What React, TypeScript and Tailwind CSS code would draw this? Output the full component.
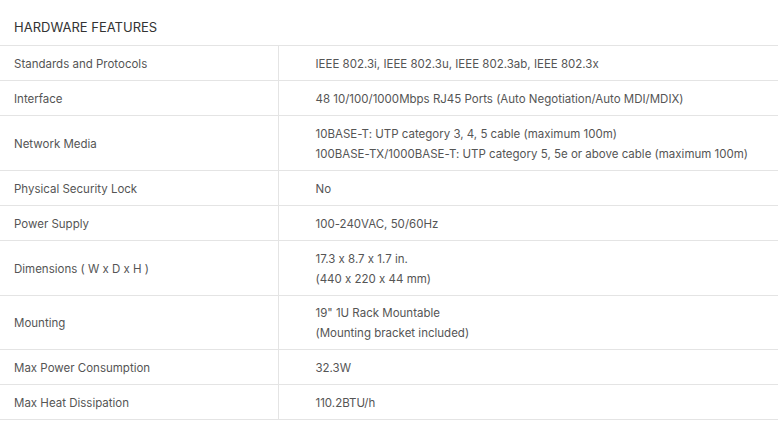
const rows: [string, string[]][] = [
  ["Standards and Protocols", ["IEEE 802.3i, IEEE 802.3u, IEEE 802.3ab, IEEE 802.3x"]],
  ["Interface", ["48 10/100/1000Mbps RJ45 Ports (Auto Negotiation/Auto MDI/MDIX)"]],
  [
    "Network Media",
    [
      "10BASE-T: UTP category 3, 4, 5 cable (maximum 100m)",
      "100BASE-TX/1000BASE-T: UTP category 5, 5e or above cable (maximum 100m)",
    ],
  ],
  ["Physical Security Lock", ["No"]],
  ["Power Supply", ["100-240VAC, 50/60Hz"]],
  ["Dimensions ( W x D x H )", ["17.3 x 8.7 x 1.7 in.", "(440 x 220 x 44 mm)"]],
  ["Mounting", ["19\" 1U Rack Mountable", "(Mounting bracket included)"]],
  ["Max Power Consumption", ["32.3W"]],
  ["Max Heat Dissipation", ["110.2BTU/h"]],
];

export default function App() {
  return (
    <div className="w-[778px] h-[424px] bg-white font-['Inter',sans-serif] [font-feature-settings:'calt'_0,'pnum'_1] overflow-hidden">
      <h3 className="h-[45px] flex items-center px-[14px] pt-[10px] text-[13px] text-[#333] uppercase">
        Hardware Features
      </h3>
      <table className="w-full border-collapse">
        <tbody>
          {rows.map(([label, values]) => {
            // the mounting row sits one pixel shorter in the source page
            const pad = label === "Mounting" ? "pt-[7px] pb-[6px]" : "pt-[7.5px] pb-[6.5px]";
            return (
              <tr key={label} className="border-y border-[#e4e4e4]">
                <td
                  className={`w-[278px] border-r border-[#e4e4e4] px-[14px] ${pad} align-middle text-[11.5px] leading-[20px] text-[#555]`}
                >
                  {label}
                </td>
                <td
                  className={`pl-[37px] pr-[14px] ${pad} align-middle text-[11.5px] leading-[20px] text-[#555] whitespace-nowrap`}
                >
                  {values.map((v) => (
                    <div key={v}>{v}</div>
                  ))}
                </td>
              </tr>
            );
          })}
        </tbody>
      </table>
    </div>
  );
}
